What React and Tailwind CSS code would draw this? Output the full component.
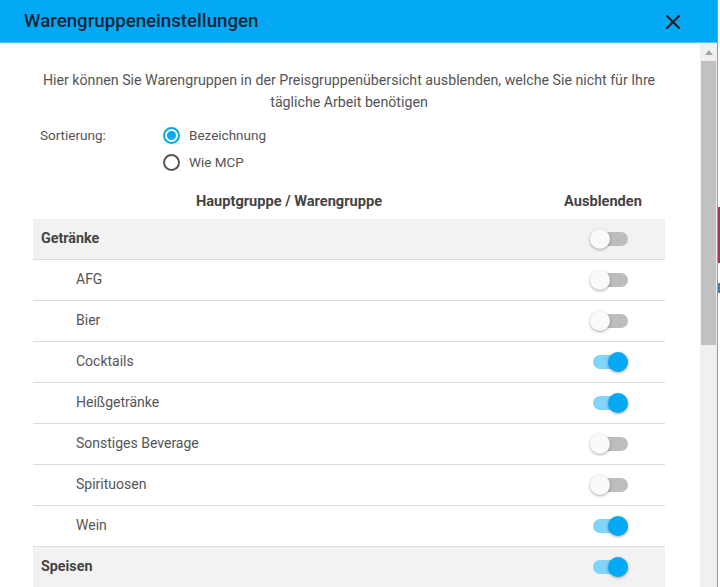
import React from "react";

function Toggle({ on }) {
  return (
    <div className="relative w-[40px] h-[22px] flex items-center">
      <div className={`absolute left-[3px] w-[35px] h-[14px] rounded-full ${on ? "bg-[#81d4fa]" : "bg-[#bdbdbd]"}`} />
      <div
        className={`absolute top-[1px] w-[20px] h-[20px] rounded-full shadow-[0_1px_3px_rgba(0,0,0,0.35)] ${on ? "left-[18px] bg-[#03a9f4]" : "left-0 bg-[#fafafa]"}`}
      />
    </div>
  );
}

const rows = [
  { name: "Getränke", main: true, on: false },
  { name: "AFG", on: false },
  { name: "Bier", on: false },
  { name: "Cocktails", on: true },
  { name: "Heißgetränke", on: true },
  { name: "Sonstiges Beverage", on: false },
  { name: "Spirituosen", on: false },
  { name: "Wein", on: true },
  { name: "Speisen", main: true, on: true },
];

export default function App() {
  return (
    <div className="w-[720px] h-[587px] overflow-hidden flex bg-white" style={{ fontFamily: "Roboto, 'Liberation Sans', sans-serif" }}>
      <div className="w-[717px] h-full flex flex-col">
        <div className="h-[43px] shrink-0 bg-[#03a9f4] border-b border-[#4fc3f7] flex items-center justify-between pl-[24px] pr-[36px]">
          <span className="text-[18.7px] font-medium text-[#102536]">Warengruppeneinstellungen</span>
          <svg width="16" height="16" viewBox="0 0 16 16" className="mt-[2px]">
            <path d="M1.5 1.5 L14.5 14.5 M14.5 1.5 L1.5 14.5" stroke="#1a1a1a" strokeWidth="2" />
          </svg>
        </div>
        <div className="flex-1 flex min-h-0">
          <div className="flex-1 flex flex-col pl-[33px] pr-[35px]">
            <p className="mt-[26px] text-[14.2px] leading-[22px] text-[#555] text-center -mx-[4px]">
              Hier können Sie Warengruppen in der Preisgruppenübersicht ausblenden, welche Sie nicht für Ihre tägliche Arbeit benötigen
            </p>
            <div className="mt-[12px] flex text-[13.5px] text-[#555]">
              <div className="w-[130px] pl-[7px] leading-[20px]">Sortierung:</div>
              <div className="flex flex-col gap-[7px]">
                <label className="flex items-center gap-[9px] leading-[20px]">
                  <span className="w-[17px] h-[17px] rounded-full border-2 border-[#03a9f4] flex items-center justify-center">
                    <span className="w-[9px] h-[9px] rounded-full bg-[#03a9f4]" />
                  </span>
                  Bezeichnung
                </label>
                <label className="flex items-center gap-[9px] leading-[20px]">
                  <span className="w-[17px] h-[17px] rounded-full border-2 border-[#555]" />
                  Wie MCP
                </label>
              </div>
            </div>
            <div className="mt-[19px] flex text-[14.6px] font-bold text-[#444] h-[22px] items-center">
              <div className="flex-1 text-center">Hauptgruppe / Warengruppe</div>
              <div className="w-[120px] text-center pr-[4px]">Ausblenden</div>
            </div>
            <div className="mt-[6px] flex flex-col">
              {rows.map((r) => (
                <div
                  key={r.name}
                  className={`h-[41px] shrink-0 flex items-center border-b border-[#dcdcdc] ${r.main ? "bg-[#f2f2f2]" : ""}`}
                >
                  <div className={`flex-1 ${r.main ? "pl-[8px] font-bold text-[#444] text-[14.3px]" : "pl-[43px] text-[#555] text-[14px]"}`}>
                    {r.name}
                  </div>
                  <div className="w-[120px] flex justify-center pl-[10px]">
                    <Toggle on={r.on} />
                  </div>
                </div>
              ))}
            </div>
          </div>
          <div className="w-[17px] shrink-0 bg-[#f0f0f0] flex flex-col items-center">
            <div className="h-[18px] flex items-center justify-center">
              <svg width="8" height="5" viewBox="0 0 8 5"><path d="M0 5 L4 0 L8 5 Z" fill="#a3a3a3" /></svg>
            </div>
            <div className="w-[15px] h-[284px] bg-[#c1c1c1]" />
          </div>
        </div>
      </div>
      <div className="w-[1px] h-full bg-[#9a9a9a]" />
      <div className="w-[2px] h-full flex flex-col bg-white">
        <div className="h-[207px]" />
        <div className="h-[56px] bg-[#b0305f]" />
        <div className="h-[20px]" />
        <div className="h-[10px] bg-[#4a7aa8]" />
      </div>
    </div>
  );
}
